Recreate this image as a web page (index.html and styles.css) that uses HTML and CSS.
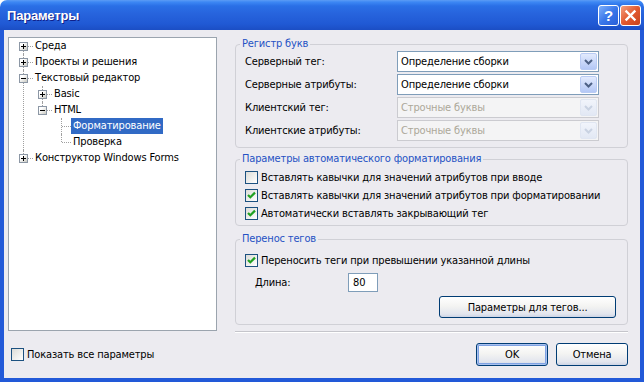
FILE: index.html
```html
<!DOCTYPE html>
<html lang="ru">
<head>
    <meta charset="UTF-8">
    <title>Параметры</title>
    <link rel="stylesheet" href="styles.css">
</head>
<body>
    <div class="window">
        <div class="titlebar">
            <span class="title">Параметры</span>
            <span class="caption-btn help">?</span>
            <span class="caption-btn close">
                <svg width="13" height="13" viewBox="0 0 13 13"><path d="M2.5 2.5 L10.5 10.5 M10.5 2.5 L2.5 10.5" stroke="#fff" stroke-width="2.4" stroke-linecap="square"/></svg>
            </span>
        </div>
        <div class="frame">
            <div class="main">
                <div class="tree">
                    <ul class="nodes">
                        <li><div class="row"><span class="exp"></span><span class="label">Среда</span></div></li>
                        <li><div class="row"><span class="exp"></span><span class="label">Проекты и решения</span></div></li>
                        <li>
                            <div class="row"><span class="exp open"></span><span class="label">Текстовый редактор</span></div>
                            <ul>
                                <li><div class="row"><span class="exp"></span><span class="label">Basic</span></div></li>
                                <li>
                                    <div class="row"><span class="exp open"></span><span class="label">HTML</span></div>
                                    <ul>
                                        <li><div class="row"><span class="label selected">Форматирование</span></div></li>
                                        <li><div class="row"><span class="label">Проверка</span></div></li>
                                    </ul>
                                </li>
                            </ul>
                        </li>
                        <li><div class="row"><span class="exp"></span><span class="label">Конструктор Windows Forms</span></div></li>
                    </ul>
                </div>

                <div class="side">
                    <fieldset class="group case-group">
                        <legend>Регистр букв</legend>
                        <div class="case-grid">
                            <span>Серверный тег:</span>
                            <div class="combo">
                                <span class="combo-text">Определение сборки</span>
                                <span class="arrow"><svg width="9" height="6" viewBox="0 0 9 6"><path d="M1 1 L4.5 4.5 L8 1" fill="none" stroke="#4d6185" stroke-width="2"/></svg></span>
                            </div>
                            <span>Серверные атрибуты:</span>
                            <div class="combo">
                                <span class="combo-text">Определение сборки</span>
                                <span class="arrow"><svg width="9" height="6" viewBox="0 0 9 6"><path d="M1 1 L4.5 4.5 L8 1" fill="none" stroke="#4d6185" stroke-width="2"/></svg></span>
                            </div>
                            <span>Клиентский тег:</span>
                            <div class="combo disabled">
                                <span class="combo-text">Строчные буквы</span>
                                <span class="arrow"><svg width="9" height="6" viewBox="0 0 9 6"><path d="M1 1 L4.5 4.5 L8 1" fill="none" stroke="#c9d2e2" stroke-width="2"/></svg></span>
                            </div>
                            <span>Клиентские атрибуты:</span>
                            <div class="combo disabled">
                                <span class="combo-text">Строчные буквы</span>
                                <span class="arrow"><svg width="9" height="6" viewBox="0 0 9 6"><path d="M1 1 L4.5 4.5 L8 1" fill="none" stroke="#c9d2e2" stroke-width="2"/></svg></span>
                            </div>
                        </div>
                    </fieldset>

                    <fieldset class="group format-group">
                        <legend>Параметры автоматического форматирования</legend>
                        <div class="check-row"><span class="check"></span>Вставлять кавычки для значений атрибутов при вводе</div>
                        <div class="check-row"><span class="check"><svg width="11" height="11" viewBox="0 0 11 11"><path d="M2 5 L4.3 7.3 L9 2.6" fill="none" stroke="#21a121" stroke-width="2.2"/></svg></span>Вставлять кавычки для значений атрибутов при форматировании</div>
                        <div class="check-row"><span class="check"><svg width="11" height="11" viewBox="0 0 11 11"><path d="M2 5 L4.3 7.3 L9 2.6" fill="none" stroke="#21a121" stroke-width="2.2"/></svg></span>Автоматически вставлять закрывающий тег</div>
                    </fieldset>

                    <fieldset class="group wrap-group">
                        <legend>Перенос тегов</legend>
                        <div class="check-row wrap-check"><span class="check"><svg width="11" height="11" viewBox="0 0 11 11"><path d="M2 5 L4.3 7.3 L9 2.6" fill="none" stroke="#21a121" stroke-width="2.2"/></svg></span>Переносить теги при превышении указанной длины</div>
                        <div class="length-row">
                            <span class="length-label">Длина:</span>
                            <span class="input">80</span>
                        </div>
                        <div class="btn-row">
                            <span class="btn tags-btn">Параметры для тегов...</span>
                        </div>
                    </fieldset>

                    <div class="sep"></div>
                </div>
            </div>

            <div class="footer">
                <div class="check-row show-all"><span class="check"></span>Показать все параметры</div>
                <span class="btn default">OK</span>
                <span class="btn">Отмена</span>
            </div>
        </div>
    </div>
</body>
</html>
```

FILE: styles.css
```css
* {
    box-sizing: border-box;
}

body {
    margin: 0;
    background: #fff;
    font-family: "DejaVu Sans Condensed", "DejaVu Sans", sans-serif;
    font-stretch: semi-condensed;
    font-size: 11px;
    letter-spacing: -0.15px;
    color: #000;
}

.window {
    width: 644px;
    height: 382px;
    display: flex;
    flex-direction: column;
}

/* title bar */
.titlebar {
    height: 30px;
    display: flex;
    align-items: center;
    padding: 0 3px 0 7px;
    border-radius: 7px 7px 0 0;
    background: linear-gradient(to bottom, #5c9cf5 0, #3d88f4 2px, #2a6fe6 6px, #2764dd 45%, #2059d4 80%, #1b4ec4 100%);
}

.title {
    flex: 1;
    color: #fff;
    font: bold 13px "Liberation Sans", sans-serif;
    letter-spacing: -0.2px;
    text-shadow: 1px 1px #10208a;
}

.caption-btn {
    width: 21px;
    height: 21px;
    margin-left: 1px;
    border: 1px solid #fff;
    border-radius: 3px;
    display: flex;
    align-items: center;
    justify-content: center;
}

.help {
    background: linear-gradient(135deg, #7eb0fa, #3a77ea 50%, #2a5fd8);
    color: #fff;
    font: bold 15px "Liberation Sans", sans-serif;
}

.close {
    background: linear-gradient(135deg, #f4a080, #e2592f 50%, #c7431c);
}

/* frame */
.frame {
    flex: 1;
    border: 4px solid #2259d8;
    border-top: 0;
    background: #ecebf0;
    padding: 7px 0 0 4px;
}

.main {
    display: flex;
    align-items: flex-start;
}

/* tree */
.tree {
    width: 209px;
    height: 294px;
    background: #fff;
    border: 1px solid #9ba4ae;
}

.tree ul {
    list-style: none;
    margin: 0;
    padding: 0;
}

.tree ul ul {
    padding-left: 19px;
}

.tree li {
    position: relative;
}

.tree li::before {
    content: '';
    position: absolute;
    left: 14px;
    top: 0;
    bottom: 0;
    border-left: 1px dotted #a0a0a0;
}

.tree .nodes > li:first-child::before {
    top: 8px;
}

.tree li:last-child::before {
    bottom: auto;
    height: 8px;
}

.row {
    position: relative;
    height: 16px;
    line-height: 16px;
    display: flex;
    padding-left: 24px;
}

.row::before {
    content: '';
    position: absolute;
    left: 15px;
    top: 8px;
    width: 9px;
    border-top: 1px dotted #a0a0a0;
}

.exp {
    position: absolute;
    left: 10px;
    top: 4px;
    width: 9px;
    height: 9px;
    z-index: 1;
    border: 1px solid #8c97a5;
    background: linear-gradient(135deg, #fff 30%, #c8c8c0);
}

.exp::before {
    content: '';
    position: absolute;
    left: 1px;
    top: 3px;
    width: 5px;
    height: 1px;
    background: #000;
}

.exp::after {
    content: '';
    position: absolute;
    left: 3px;
    top: 1px;
    width: 1px;
    height: 5px;
    background: #000;
}

.exp.open::after {
    display: none;
}

.label {
    padding: 0 2px;
    white-space: nowrap;
}

.label.selected {
    background: #316ac5;
    color: #fff;
}

/* right side */
.side {
    width: 393px;
    margin-left: 18px;
}

.group {
    margin: 0;
    border: 1px solid #d0d0d6;
    border-radius: 4px;
}

.group legend {
    padding: 0 2px;
    margin-left: -5px;
    line-height: 14px;
    color: #2552c4;
}

.case-group {
    padding: 0 28px 6px 9px;
}

.case-grid {
    display: grid;
    grid-template-columns: 152px 202px;
    row-gap: 2px;
    align-items: center;
}

.combo {
    height: 21px;
    border: 1px solid #7f9db9;
    background: #fff;
    display: flex;
    align-items: center;
    padding-left: 3px;
}

.combo-text {
    flex: 1;
}

.arrow {
    width: 17px;
    height: 17px;
    margin-right: 1px;
    border: 1px solid #b9cbf4;
    border-radius: 2px;
    background: linear-gradient(#e2eafd, #b4c8f6);
    display: flex;
    align-items: center;
    justify-content: center;
}

.combo.disabled {
    border-color: #cbcbd0;
    background: #f4f4f5;
    color: #aca899;
}

.combo.disabled .arrow {
    border-color: #e0e6f2;
    background: linear-gradient(#f1f4fb, #e2e8f4);
}

.format-group {
    margin-top: 4px;
    padding: 2px 10px 3px 9px;
}

.check-row {
    height: 18px;
    display: flex;
    align-items: center;
    gap: 3px;
    white-space: nowrap;
}

.check {
    width: 13px;
    height: 13px;
    border: 1px solid #1c5180;
    background: linear-gradient(135deg, #dcdcd7, #fff);
    display: flex;
    align-items: center;
    justify-content: center;
}

.wrap-group {
    margin-top: 6px;
    padding: 0 11px 6px 9px;
}

.wrap-check {
    margin-top: 5px;
}

.length-row {
    height: 19px;
    margin-top: 4px;
    padding-left: 10px;
    display: flex;
    align-items: center;
}

.length-label {
    width: 93px;
}

.input {
    width: 30px;
    height: 19px;
    line-height: 17px;
    padding-left: 4px;
    border: 1px solid #7f9db9;
    background: #fff;
}

.btn-row {
    display: flex;
    justify-content: flex-end;
    margin-top: 4px;
}

.btn {
    width: 72px;
    height: 23px;
    border: 1px solid #003c74;
    border-radius: 3px;
    background: linear-gradient(#fff, #f4f4f2 45%, #e2e5ee 85%, #cdd4e4);
    display: flex;
    align-items: center;
    justify-content: center;
}

.tags-btn {
    width: 177px;
    height: 22px;
}

.btn.default {
    box-shadow: inset 0 0 0 1px #a9c1ef, inset 0 0 0 2px #7fa2e3;
}

.sep {
    margin-top: 6px;
    border-top: 1px solid #c5c5cb;
    border-bottom: 1px solid #fff;
}

/* footer */
.footer {
    display: flex;
    align-items: center;
    gap: 8px;
    padding: 10px 12px 0 3px;
}

.show-all {
    margin-right: auto;
}
```
